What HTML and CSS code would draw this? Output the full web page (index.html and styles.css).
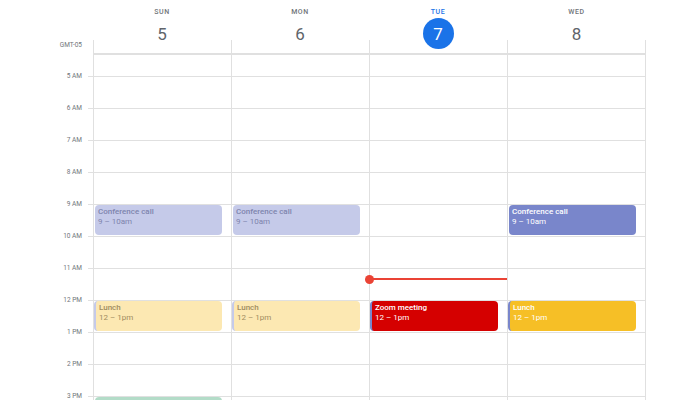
FILE: index.html
```html
<!DOCTYPE html>
<html>
<head>
<meta charset="utf-8">
<link rel="stylesheet" href="styles.css">
</head>
<body>
<div class="cal">
  <div class="head">
    <div class="gutter-head"><span class="tz">GMT-05</span></div>
    <div class="day-head"><span class="dow">SUN</span><span class="date">5</span></div>
    <div class="day-head"><span class="dow">MON</span><span class="date">6</span></div>
    <div class="day-head today"><span class="dow">TUE</span><span class="date">7</span></div>
    <div class="day-head last"><span class="dow">WED</span><span class="date">8</span></div>
  </div>
  <div class="grid">
    <div class="gutter">
      <div class="spacer"></div>
      <div class="hour"><span>5 AM</span></div>
      <div class="hour"><span>6 AM</span></div>
      <div class="hour"><span>7 AM</span></div>
      <div class="hour"><span>8 AM</span></div>
      <div class="hour"><span>9 AM</span></div>
      <div class="hour"><span>10 AM</span></div>
      <div class="hour"><span>11 AM</span></div>
      <div class="hour"><span>12 PM</span></div>
      <div class="hour"><span>1 PM</span></div>
      <div class="hour"><span>2 PM</span></div>
      <div class="hour"><span>3 PM</span></div>
    </div>
    <div class="day">
      <div class="ev conf past at9"><div class="t">Conference call</div><div class="s">9 – 10am</div></div>
      <div class="ev lunch past at12"><div class="t">Lunch</div><div class="s">12 – 1pm</div></div>
      <div class="ev green past at15"></div>
    </div>
    <div class="day">
      <div class="ev conf past at9"><div class="t">Conference call</div><div class="s">9 – 10am</div></div>
      <div class="ev lunch past at12"><div class="t">Lunch</div><div class="s">12 – 1pm</div></div>
    </div>
    <div class="day now-col">
      <div class="now"></div>
      <div class="ev zoom at12"><div class="t">Zoom meeting</div><div class="s">12 – 1pm</div></div>
    </div>
    <div class="day last">
      <div class="ev conf at9"><div class="t">Conference call</div><div class="s">9 – 10am</div></div>
      <div class="ev lunch at12"><div class="t">Lunch</div><div class="s">12 – 1pm</div></div>
    </div>
  </div>
</div>
</body>
</html>
```
FILE: styles.css
```css
html, body {
  margin: 0;
  padding: 0;
  height: 400px;
  overflow: hidden;
  background: #fff;
  font-family: Roboto, "Liberation Sans", sans-serif;
}

.cal {
  width: 700px;
}

.head {
  display: grid;
  grid-template-columns: 93px 138px 138px 138px 139px;
  height: 54px;
}

.gutter-head {
  display: flex;
  align-items: flex-end;
  justify-content: flex-end;
  padding: 0 11px 5px 0;
}

.tz {
  font-size: 6.5px;
  line-height: 8px;
  color: #70757a;
}

.day-head {
  display: flex;
  flex-direction: column;
  align-items: center;
  border-bottom: 1px solid #e0e0e0;
  background: linear-gradient(#e0e0e0, #e0e0e0) left bottom / 1px 13px no-repeat;
}

.day-head.last {
  background:
    linear-gradient(#e0e0e0, #e0e0e0) left bottom / 1px 13px no-repeat,
    linear-gradient(#e0e0e0, #e0e0e0) right bottom / 1px 13px no-repeat;
}

.dow {
  margin-top: 8px;
  font-size: 7px;
  line-height: 9px;
  font-weight: 500;
  letter-spacing: 0.6px;
  color: #70757a;
}

.date {
  margin-top: 1px;
  width: 31px;
  height: 31px;
  border-radius: 50%;
  display: flex;
  align-items: center;
  justify-content: center;
  font-size: 17px;
  color: #60646a;
}

.today .dow {
  color: #1a73e8;
}

.today .date {
  background: #1a73e8;
  color: #fff;
}

.grid {
  display: grid;
  grid-template-columns: 93px 138px 138px 138px 139px;
  height: 346px;
  overflow: hidden;
}

.gutter {
  display: grid;
  grid-template-rows: 22px repeat(11, 32px);
}

.hour {
  display: flex;
  justify-content: flex-end;
  align-items: flex-start;
  background: linear-gradient(#e0e0e0, #e0e0e0) right top / 5px 1px no-repeat;
}

.hour span {
  margin: -4px 11px 0 0;
  font-size: 6.5px;
  line-height: 8px;
  color: #70757a;
}

.day {
  position: relative;
  display: grid;
  grid-template-rows: 22px repeat(11, 32px);
  border-left: 1px solid #e0e0e0;
  background-image: repeating-linear-gradient(to bottom, #e0e0e0 0 1px, transparent 1px 32px);
  background-position: 0 22px;
}

.day.last {
  border-right: 1px solid #e0e0e0;
}

.ev {
  margin: 1px 9px 1px 1px;
  border-radius: 4px;
  padding: 2px 3px;
  font-size: 8px;
  line-height: 10px;
  color: #fff;
  overflow: hidden;
}

.ev .t {
  font-weight: 500;
}

.at9 { grid-row: 6; }
.at12 { grid-row: 9; }
.at15 { grid-row: 12; }

.conf {
  background: #7986cb;
}

.conf.past {
  background: #c5cae9;
  color: #7e84ad;
}

.lunch,
.zoom {
  margin-left: 0;
  border-left: 2px solid #7986cb;
  padding-left: 3px;
}

.lunch {
  background: #f6bf26;
}

.lunch.past {
  background: #fce8b2;
  border-left-color: #c5cae9;
  color: #a08c5f;
}

.zoom {
  background: #d50000;
}

.green.past {
  background: #b3dcc8;
  margin-bottom: 0;
}

.now {
  position: absolute;
  left: 0;
  right: 0;
  top: 224px;
  height: 2px;
  background: #ea4335;
}

.now::before {
  content: "";
  position: absolute;
  left: -5px;
  top: -3.5px;
  width: 9px;
  height: 9px;
  border-radius: 50%;
  background: #ea4335;
}
```
